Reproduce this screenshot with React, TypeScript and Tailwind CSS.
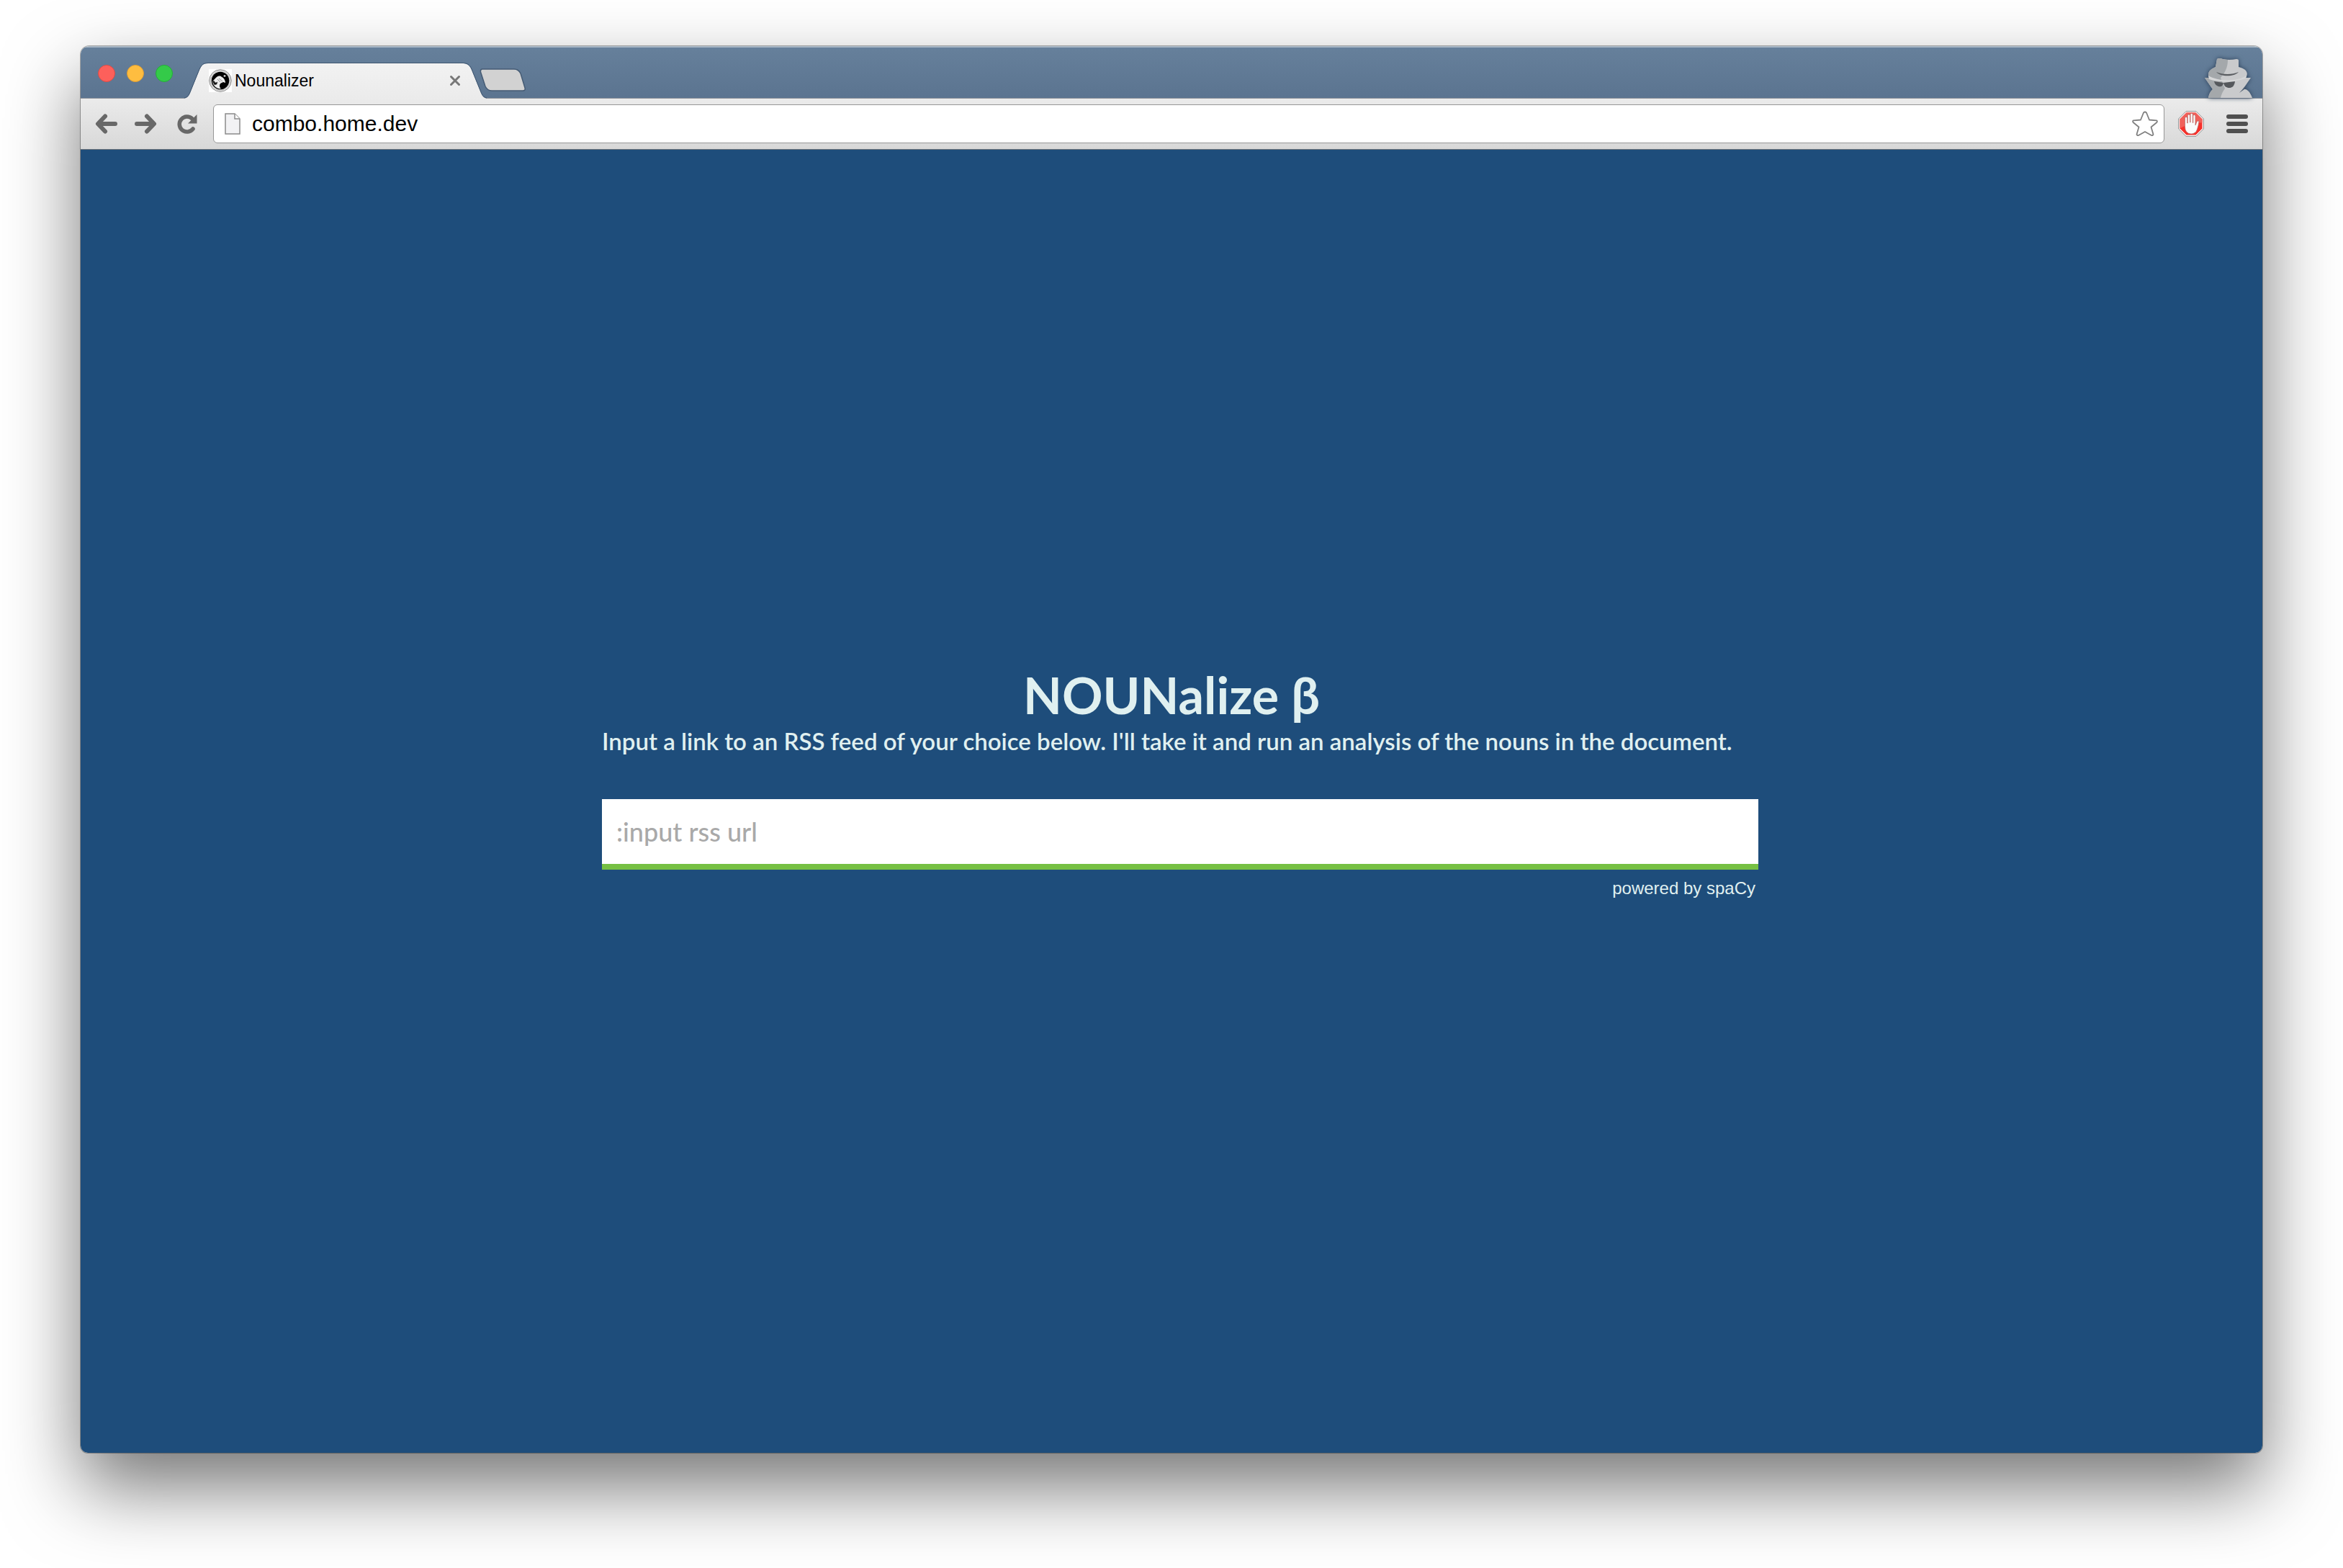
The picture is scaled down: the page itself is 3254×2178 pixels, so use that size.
import React from "react";

function TrafficLights() {
  return (
    <div className="flex gap-4 pt-6 pl-6">
      <button aria-label="Close window" className="size-6 rounded-full border border-[#dd4b45] bg-[#fd605b]" />
      <button aria-label="Minimize window" className="size-6 rounded-full border border-[#dd9d35] bg-[#febd40]" />
      <button aria-label="Zoom window" className="size-6 rounded-full border border-[#25ac39] bg-[#34ca49]" />
    </div>
  );
}

function Favicon() {
  return (
    <svg viewBox="0 0 32 32" className="size-8 shrink-0" aria-hidden="true">
      <rect width="32" height="32" fill="#fff" />
      <circle cx="16" cy="16" r="15.3" fill="#e4e4e4" stroke="#8a8a8a" strokeWidth="1" />
      <circle cx="16" cy="16" r="13.4" fill="none" stroke="#9a9a9a" strokeWidth="1" strokeDasharray="1 1" />
      <circle cx="16" cy="16" r="12.300" fill="#000" />
      <path d="M5 17l3-3c3-4 7-6 10-3 3 1 5 5 5 8l-3-1-4 2-1 5 2 2c-5 1-11-3-12-10z" fill="#ececec" />
      <path d="M5 17l2-1 2 3 3-1-1 3-3 1zM14 13l5 4M12 14l4 4" fill="#111" stroke="#555" strokeWidth=".6" />
      <path d="M15 22c1-3 5-3 8-2l-1 7h-5z" fill="#000" />
      <path d="M22 8v3M20.500 9.500h3" stroke="#fff" strokeWidth="1" />
    </svg>
  );
}

function ActiveTab() {
  return (
    <div className="relative mt-[21px] ml-4 flex h-[50px] w-[420px] items-center pr-9 pl-[34px]">
      <svg viewBox="0 0 420 50" className="absolute inset-0 h-full w-full" aria-hidden="true">
        <defs>
          <linearGradient id="tab" x1="0" y1="0" x2="0" y2="1">
            <stop offset="0" stopColor="#f2f2f2" />
            <stop offset="1" stopColor="#ebebeb" />
          </linearGradient>
        </defs>
        <path d="M0 50C4 49 6 47 8 42L21 10C24 4 26 1 33 1H386C392 1 396 3 399 10L412 42C414 47 416 49 420 50Z" fill="url(#tab)" />
        <path d="M0 49C4 48 6 46 8 41L21 9C24 3 26 .5 33 .5H386C392 .5 396 2 399 9L412 41C414 46 416 48 420 49" fill="none" stroke="#3f5670" strokeWidth="1" />
      </svg>
      <div className="relative flex min-w-0 grow items-center gap-1">
        <Favicon />
        <span className="grow text-[23px] leading-8">Nounalizer</span>
        <button aria-label="Close tab" className="size-4">
          <svg viewBox="0 0 16 16" aria-hidden="true">
            <path d="M2.500 2.500l11 11M13.500 2.500l-11 11" stroke="#777" strokeWidth="3" strokeLinecap="round" />
          </svg>
        </button>
      </div>
    </div>
  );
}

function Incognito() {
  return (
    <svg viewBox="0 0 68 56" className="mr-[13px] h-14 w-[68px] self-end overflow-hidden drop-shadow-[0_0_3px_#2c4058]" aria-hidden="true">
      <path d="M6 56c1-6 3-9 6-12L1 28h6c-3-8 2-12 9-15L18 2q3-2 8 0 9 2 19 0 3 0 3 2v9c9 2 15 7 10 15h7L54 44c6-1 10 4 13 12z" fill="#c9cacc" />
      <path d="M6 56c1-6 3-9 6-12L1 28h6c-3-8 2-12 9-15L18 2q3-2 8 0l7 1c0 11-4 18-10 25l6 15c-3 4-5 8-6 13z" fill="#a4a8ab" />
      <path d="M6 25c12 8 40 9 53 0l-1 4c-14 5-38 6-51 1z" fill="#d6d7d8" />
      <path d="M17 20c9 4 22 4 31 0-6 7-25 7-31 0z" fill="#5b5e62" />
      <path d="M14 33l13 2c-1 5-4 6-7 5s-5-3-6-7zM27 35l16-2c-1 7-4 9-8 9s-7-2-8-7z" fill="#55585c" />
      <path d="M49 49l8-9-1 4z" fill="#4d5d70" />
    </svg>
  );
}

function Toolbar() {
  return (
    <div className="flex h-[72px] items-center border-t border-b border-t-[#8c9199] border-b-[#6f7479] bg-linear-to-b from-[#ebebeb] to-[#d8d8d8] px-5 pb-px">
      <nav className="flex items-center gap-6 pr-[22px]">
        <button aria-label="Back">
          <svg viewBox="0 0 31 28" className="h-7 w-[31px]" fill="none" stroke="#686868" strokeWidth="6" strokeLinecap="round" strokeLinejoin="round" aria-hidden="true">
            <path d="M14 3.500L4 14l10 10.500M5 14h23" />
          </svg>
        </button>
        <button aria-label="Forward">
          <svg viewBox="0 0 31 28" className="h-7 w-[31px]" fill="none" stroke="#686868" strokeWidth="6" strokeLinecap="round" strokeLinejoin="round" aria-hidden="true">
            <path d="M17 3.500L27 14 17 24.500M26 14H3" />
          </svg>
        </button>
        <button aria-label="Reload" className="ml-1">
          <svg viewBox="0 0 28 28" className="size-7" aria-hidden="true">
            <path d="M22 21a10.500 10.500 0 1 1-1-14" fill="none" stroke="#686868" strokeWidth="5.500" strokeLinecap="round" />
            <path d="M27.500 1v12.500H15z" fill="#686868" />
          </svg>
        </button>
      </nav>
      <label className="flex h-[54px] grow items-center rounded-md border border-[#979797] bg-white pr-2 pl-[15px]">
        <svg viewBox="0 0 22 30" className="h-[30px] w-[22px] shrink-0" aria-hidden="true">
          <path d="M1 1h13l7 7v21H1z" fill="#f2f2f4" stroke="#8b8b8b" strokeWidth="1.500" />
          <path d="M14 1v7h7" fill="#fff" stroke="#8b8b8b" strokeWidth="1.500" />
        </svg>
        <input aria-label="Address" defaultValue="combo.home.dev" className="ml-4 min-w-0 grow text-[30px] leading-9 outline-none" />
        <button aria-label="Bookmark this page">
          <svg viewBox="0 0 36 36" className="size-9" aria-hidden="true">
            <path d="M18 1.500q1.500 0 2.200 1.500L24 12.500l10 .8q1.600 1 .4 2.700L26.500 22.500l3 10q-.5 2.200-2.500 1.500L18 29 9 34q-2 .7-2.500-1.500l3-10L1.600 16q-1.200-1.700.4-2.700l10-.8L15.800 3q.7-1.500 2.200-1.500z" fill="none" stroke="#808080" strokeWidth="1.800" strokeLinejoin="round" />
          </svg>
        </button>
      </label>
      <button aria-label="Ad blocker" className="ml-[19px]">
        <svg viewBox="0 0 36 36" className="size-9" aria-hidden="true">
          <path d="M11 .7h14L35.300 11v14L25 35.300H11L.7 25V11z" fill="#fff" stroke="#8a8a8a" strokeWidth="1" />
          <path d="M11.500 2.500h13l9 9v13l-9 9h-13l-9-9v-13z" fill="#f5302a" />
          <path d="M11.500 2.500h13l9 9v5q-16-1-31 8v-13z" fill="#f0605a" />
          <path d="M9.500 22V10q0-1.600 1.600-1.600T12.700 10v7h.6V6.500q0-1.600 1.600-1.600t1.600 1.600V16h.6V5q0-1.600 1.600-1.600T20.300 5v11.500h.6V7q0-1.600 1.500-1.600T24 7v13l2-5q1-1.600 3-.6-.6 6-2.500 11-2 6.600-8.500 6.600-8.500-.6-8.500-10z" fill="#fafafa" stroke="#b05a56" strokeWidth=".6" />
        </svg>
      </button>
      <button aria-label="Menu" className="ml-[31px] flex flex-col gap-1">
        <span className="h-1.5 w-[30px] rounded-full bg-[#505050]" />
        <span className="h-1.5 w-[30px] rounded-full bg-[#505050]" />
        <span className="h-1.5 w-[30px] rounded-full bg-[#505050]" />
      </button>
    </div>
  );
}

export default function App() {
  return (
    <div className="flex min-h-screen flex-col bg-white px-28 pt-16 pb-40 font-['Liberation_Sans',sans-serif] text-black">
      <div className="flex grow flex-col overflow-hidden rounded-t-xl rounded-b-[10px] shadow-[0_0_0_1px_rgba(0,0,0,0.3),0_48px_104px_rgba(0,0,0,0.54)]">
        <header className="flex h-[72px] border-t-2 border-[#a9b8c6] bg-linear-to-b from-[#66809b] to-[#5b7490]">
          <TrafficLights />
          <ActiveTab />
          <button aria-label="New tab" className="mt-[29px] -ml-2.5 self-start">
            <svg viewBox="0 0 64 32" className="h-8 w-16" aria-hidden="true">
              <path d="M4 1H48q6 0 9 6l6 20q1 4-3 4H17q-6 0-9-6L1.500 5Q1 1 4 1z" fill="#d2d2d2" stroke="#455b74" strokeWidth="1.500" />
            </svg>
          </button>
          <div className="grow" />
          <Incognito />
        </header>
        <Toolbar />
        <main className="flex grow flex-col items-center bg-[#1e4d7b] px-8 pt-[719px] font-[Futura,Lato,sans-serif] text-[#e0f0f0]">
          <h1 className="text-[70px] leading-[76px] font-bold">NOUNalize β</h1>
          <form className="mt-1.5 ml-6 flex w-full max-w-[1606px] flex-col">
            <label htmlFor="rss" className="text-[33px] leading-10 font-semibold whitespace-nowrap">
              Input a link to an RSS feed of your choice below. I'll take it and run an analysis of the nouns in the document.
            </label>
            <input
              id="rss"
              type="url"
              placeholder=":input rss url"
              className="mt-[61px] h-[98px] border-b-8 border-[#76c043] bg-white px-5 text-4xl font-medium text-black outline-none placeholder:text-[#a9a9a9]"
            />
          </form>
          <p className="mt-2.5 ml-6 w-full max-w-[1606px] pr-1 text-right font-['Liberation_Sans',sans-serif] text-2xl">powered by spaCy</p>
        </main>
      </div>
    </div>
  );
}
